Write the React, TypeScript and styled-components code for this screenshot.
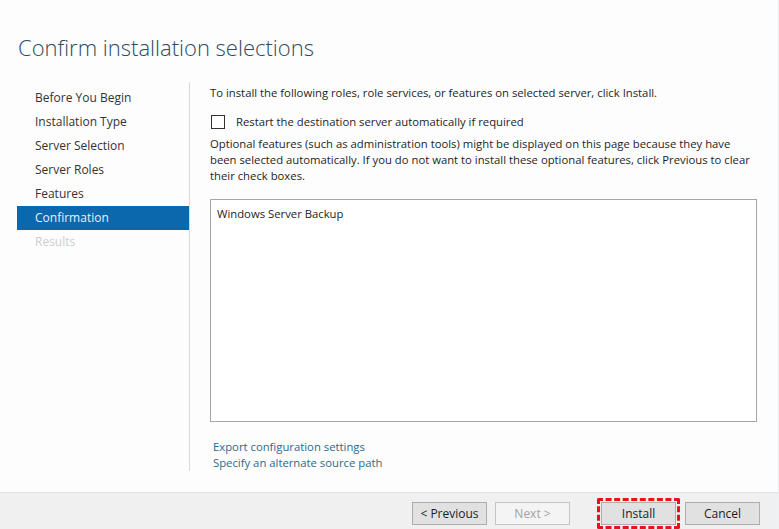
import React from 'react';
import styled, { createGlobalStyle } from "styled-components";

const GlobalStyle = createGlobalStyle`
  html, body {
    margin: 0;
    padding: 0;
    background: #fdfdfd;
  }
  body {
    font-family: "Open Sans", "Noto Sans", sans-serif;
    color: #1e1e1e;
  }
`;

const Window = styled.div`
  width: 779px;
  height: 529px;
  display: flex;
  flex-direction: column;
  background: #fdfdfd;
  box-sizing: border-box;
  border-right: 1px solid #eceff1;
  overflow: hidden;
`;

const Title = styled.h1`
  margin: 0;
  height: 87px;
  box-sizing: border-box;
  padding: 33px 0 0 18px;
  font-size: 22px;
  font-weight: 300;
  line-height: 28px;
  color: #2d4b5d;
`;

const Main = styled.div`
  flex: 1;
  display: flex;
  padding-bottom: 21px;
`;

const Nav = styled.ul`
  list-style: none;
  margin: 0;
  padding: 4px 0 0 17px;
  width: 172px;
  border-right: 1px solid #d9d9d9;
`;

const NavItem = styled.li<{ $active?: boolean; $disabled?: boolean }>`
  height: 24px;
  line-height: 24px;
  padding-left: 18px;
  font-size: 12px;
  color: ${p => p.$active ? "#e6f1fa" : p.$disabled ? "#cdcdcd" : "#333"};
  background: ${p => p.$active ? "#0b68ad" : "transparent"};
`;

const Content = styled.div`
  flex: 1;
  padding: 3px 20px 0 20px;
  font-size: 11.3px;
  line-height: 16px;
`;

const Intro = styled.p`
  margin: 0;
`;

const CheckRow = styled.label`
  display: flex;
  align-items: center;
  margin-top: 13px;
  height: 16px;
  gap: 11px;
`;

const CheckBox = styled.span`
  width: 12px;
  height: 12px;
  margin-left: 1px;
  border: 1px solid #333;
  background: #fff;
`;

const Note = styled.p`
  margin: 6px 0 0;
`;

const ListBox = styled.div`
  margin-top: 15px;
  width: 547px;
  height: 223px;
  box-sizing: border-box;
  border: 1px solid #a5a5a5;
  background: #fff;
  padding: 6px 6px;
`;

const Links = styled.div`
  margin-top: 17px;
  padding-left: 3px;
  display: flex;
  flex-direction: column;
`;

const Link = styled.a`
  color: #2a6a8c;
  text-decoration: none;
  cursor: pointer;
`;

const Footer = styled.div`
  height: 38px;
  box-sizing: border-box;
  background: #f0f0f0;
  border-top: 1px solid #e2e2e2;
  display: flex;
  align-items: center;
  justify-content: flex-end;
  padding: 5px 18px 0 0;
`;

const Button = styled.button<{ $disabled?: boolean }>`
  width: 75px;
  height: 23px;
  box-sizing: border-box;
  font-family: inherit;
  font-size: 12px;
  padding: 0;
  background: ${p => p.$disabled ? "#f4f4f4" : "#e1e1e1"};
  border: 1px solid ${p => p.$disabled ? "#c4c4c4" : "#adadad"};
  color: ${p => p.$disabled ? "#a3a3a3" : "#1e1e1e"};
`;

const Highlight = styled.span`
  display: inline-flex;
  border: 3px dashed #e8121d;
  padding: 1px;
  border-radius: 2px;
`;

const steps = [
    "Before You Begin",
    "Installation Type",
    "Server Selection",
    "Server Roles",
    "Features",
    "Confirmation",
    "Results",
];

const App = () => {
    return (
        <>
            <GlobalStyle />
            <Window>
                <Title>Confirm installation selections</Title>
                <Main>
                    <Nav>
                        { steps.map(s => (
                            <NavItem key={ s } $active={ s === "Confirmation" } $disabled={ s === "Results" }>
                                { s }
                            </NavItem>
                        )) }
                    </Nav>
                    <Content>
                        <Intro>To install the following roles, role services, or features on selected server, click Install.</Intro>
                        <CheckRow>
                            <CheckBox />
                            Restart the destination server automatically if required
                        </CheckRow>
                        <Note>
                            Optional features (such as administration tools) might be displayed on this page because they have<br />
                            been selected automatically. If you do not want to install these optional features, click Previous to clear<br />
                            their check boxes.
                        </Note>
                        <ListBox>Windows Server Backup</ListBox>
                        <Links>
                            <Link>Export configuration settings</Link>
                            <Link>Specify an alternate source path</Link>
                        </Links>
                    </Content>
                </Main>
                <Footer>
                    <Button>&lt; Previous</Button>
                    <Button $disabled style={ { marginLeft: 8 } }>Next &gt;</Button>
                    <Highlight style={ { marginLeft: 27 } }>
                        <Button>Install</Button>
                    </Highlight>
                    <Button style={ { marginLeft: 5 } }>Cancel</Button>
                </Footer>
            </Window>
        </>
    );
};

export default App;
